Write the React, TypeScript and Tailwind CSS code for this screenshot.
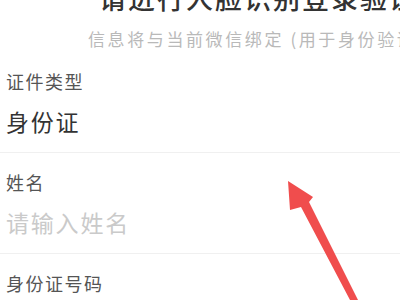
import React from 'react';

const font = { fontFamily: '"Noto Sans CJK SC", "Noto Sans", sans-serif' };

interface FieldProps {
  label: string;
  value?: string;
  placeholder?: string;
  last?: boolean;
  first?: boolean;
}

const Field: React.FC<FieldProps> = ({ label, value, placeholder, last, first }) => {
  return (
    <div
      className={`pl-[6px] ${first ? 'pt-[25px]' : 'pt-[19px]'} ${
        last ? '' : 'pb-[16px] border-b border-[#f0f0f0]'
      }`}
    >
      <div className="h-[20px] leading-[20px] text-[18px] tracking-[1.5px] text-[#555]">{label}</div>
      {!last && (
        <div
          className={`mt-[15px] h-[30px] leading-[30px] text-[23px] tracking-[1.8px] ${
            value ? 'text-[#333]' : 'text-[#cacaca]'
          }`}
        >
          {value ?? placeholder}
        </div>
      )}
    </div>
  );
};

export default function App() {
  return (
    <div className="relative w-[400px] h-[300px] overflow-hidden bg-white" style={font}>
      {/* header */}
      <div className="flex flex-col pl-[99px] -mt-[16px]">
        <div className="h-[28px] leading-[28px] text-[27px] tracking-[2px] font-medium text-[#333] whitespace-nowrap">
          请进行人脸识别登录验证
        </div>
        <div className="mt-[17px] -ml-[11px] h-[20px] leading-[20px] text-[17px] tracking-[2.6px] text-[#b9b9b9] whitespace-nowrap">
          信息将与当前微信绑定 (用于身份验证)
        </div>
      </div>

      {/* form */}
      <div className="flex flex-col -mt-[3px]">
        <Field label="证件类型" value="身份证" first />
        <Field label="姓名" placeholder="请输入姓名" />
        <Field label="身份证号码" last />
      </div>

      {/* red arrow */}
      <svg className="absolute left-0 top-0 pointer-events-none" width="400" height="300" viewBox="0 0 400 300">
        <polygon
          points="288,181 313,197 309,202 358,300 350,300 301,207 290,210"
          fill="#f04d4d"
        />
      </svg>
    </div>
  );
}
